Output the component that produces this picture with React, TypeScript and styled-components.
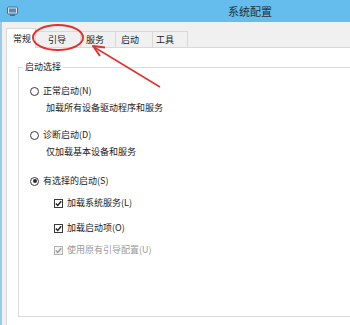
import React from 'react';
import styled, { createGlobalStyle } from 'styled-components';

const GlobalStyle = createGlobalStyle`
  html, body {
    margin: 0;
    padding: 0;
    overflow: hidden;
    background: #ffffff;
  }
  body {
    font-family: "Noto Sans CJK SC", "Noto Sans", sans-serif;
  }
`;

const Screen = styled.div`
  position: relative;
  width: 350px;
  height: 325px;
  overflow: hidden;
`;

const Window = styled.div`
  height: 325px;
  display: flex;
  flex-direction: column;
  background: #f0f0f0;
`;

const TitleBar = styled.div`
  height: 22px;
  flex: none;
  background: #64bdec;
  display: flex;
  align-items: center;
  padding-left: 7px;
  position: relative;
`;

const Title = styled.div`
  position: absolute;
  left: 228px;
  top: 0;
  line-height: 22px;
  font-size: 11px;
  color: #24323f;
`;

const Body = styled.div`
  flex: 1;
  display: flex;
  flex-direction: column;
  border-left: 2px solid #9ccbea;
  padding-left: 4px;
`;

const TabStrip = styled.div`
  height: 26px;
  display: flex;
  align-items: flex-end;
  position: relative;
  z-index: 1;
  margin-bottom: -1px;
`;

const Tab = styled.div<{ $w: number; $pad: number; $active?: boolean }>`
  box-sizing: border-box;
  width: ${(p) => p.$w}px;
  height: ${(p) => (p.$active ? 20 : 17)}px;
  padding-left: ${(p) => p.$pad}px;
  border: 1px solid #d9d9d9;
  border-bottom: ${(p) => (p.$active ? 'none' : '1px solid #d9d9d9')};
  margin-left: ${(p) => (p.$active ? 0 : -1)}px;
  background: ${(p) => (p.$active ? '#ffffff' : '#f0f0f0')};
  font-size: 9px;
  line-height: ${(p) => (p.$active ? 19 : 15)}px;
  color: #222;
  white-space: nowrap;
`;

const Panel = styled.div`
  flex: 1;
  background: #ffffff;
  border-top: 1px solid #d9d9d9;
  border-left: 1px solid #d9d9d9;
  padding: 13px 0 0 11px;
`;

const Group = styled.div`
  border-top: 1px solid #dcdcdc;
  border-left: 1px solid #dcdcdc;
  border-bottom: 1px solid #dcdcdc;
  margin-top: 6px;
  padding: 0 0 60px 4px;
  font-size: 9px;
  line-height: 12px;
`;

const Legend = styled.div`
  width: fit-content;
  margin-top: -7px;
  padding: 0 2px;
  background: #ffffff;
  font-size: 9px;
  line-height: 12px;
  color: #222;
`;

const Row = styled.div<{ $top: number; $indent: number; $muted?: boolean }>`
  display: flex;
  align-items: center;
  height: 12px;
  margin-top: ${(p) => p.$top}px;
  padding-left: ${(p) => p.$indent}px;
  font-size: 9px;
  line-height: 12px;
  color: ${(p) => (p.$muted ? '#9a9a9a' : '#222')};
  white-space: nowrap;
`;

const Radio = styled.span<{ $on?: boolean }>`
  box-sizing: border-box;
  width: 9px;
  height: 9px;
  border-radius: 50%;
  border: 1px solid #3a3a3a;
  margin-right: 4px;
  display: flex;
  align-items: center;
  justify-content: center;
  &::after {
    content: '';
    width: 4px;
    height: 4px;
    border-radius: 50%;
    background: ${(p) => (p.$on ? '#2a2a2a' : 'transparent')};
  }
`;

const Check = styled.span<{ $muted?: boolean }>`
  box-sizing: border-box;
  width: 9px;
  height: 9px;
  border: 1px solid ${(p) => (p.$muted ? '#b4b4b4' : '#3a3a3a')};
  margin-right: 4px;
  display: flex;
  align-items: center;
  justify-content: center;
  background: ${(p) => (p.$muted ? '#f2f2f2' : '#ffffff')};
`;

const Overlay = styled.svg`
  position: absolute;
  left: 0;
  top: 0;
  pointer-events: none;
  z-index: 5;
`;

const tabs = [
  { label: '常规', w: 30, pad: 6, active: true },
  { label: '引导', w: 46, pad: 12 },
  { label: '服务', w: 36, pad: 5 },
  { label: '启动', w: 38, pad: 5 },
  { label: '工具', w: 36, pad: 3 },
];

const Tick = ({ color }: { color: string }) => (
  <svg width="7" height="7" viewBox="0 0 7 7">
    <path d="M0.8 3.6 L2.7 5.5 L6.2 1.2" fill="none" stroke={color} strokeWidth="1.4" />
  </svg>
);

const AppIcon = () => (
  <svg width="11" height="11" viewBox="0 0 11 11">
    <rect x="0.5" y="1" width="10" height="7" rx="1" fill="#d9e6f2" stroke="#4f6b8a" />
    <rect x="2" y="2.5" width="7" height="4" fill="#5a86b8" />
    <rect x="3" y="8.5" width="5" height="1.5" fill="#4f6b8a" />
  </svg>
);

export default function App() {
  return (
    <Screen>
      <GlobalStyle />
      <Window>
        <TitleBar>
          <AppIcon />
          <Title>系统配置</Title>
        </TitleBar>
        <Body>
          <TabStrip>
            {tabs.map((t) => (
              <Tab key={t.label} $w={t.w} $pad={t.pad} $active={t.active}>
                {t.label}
              </Tab>
            ))}
          </TabStrip>
          <Panel>
            <Group>
              <Legend>启动选择</Legend>
              <Row $top={12} $indent={7}>
                <Radio />
                正常启动(N)
              </Row>
              <Row $top={5} $indent={23}>加载所有设备驱动程序和服务</Row>
              <Row $top={15} $indent={7}>
                <Radio />
                诊断启动(D)
              </Row>
              <Row $top={5} $indent={23}>仅加载基本设备和服务</Row>
              <Row $top={17} $indent={7}>
                <Radio $on />
                有选择的启动(S)
              </Row>
              <Row $top={10} $indent={31}>
                <Check>
                  <Tick color="#222" />
                </Check>
                加载系统服务(L)
              </Row>
              <Row $top={13} $indent={31}>
                <Check>
                  <Tick color="#222" />
                </Check>
                加载启动项(O)
              </Row>
              <Row $top={10} $indent={31} $muted>
                <Check $muted>
                  <Tick color="#9a9a9a" />
                </Check>
                使用原有引导配置(U)
              </Row>
            </Group>
          </Panel>
        </Body>
      </Window>
      <Overlay width="350" height="325" viewBox="0 0 350 325">
        <ellipse cx="58" cy="37.5" rx="25" ry="12.5" fill="none" stroke="#e2322f" strokeWidth="2" />
        <line x1="160" y1="87" x2="94" y2="47" stroke="#e2322f" strokeWidth="1.5" />
        <polyline points="105,47.5 93,46 100,56" fill="none" stroke="#e2322f" strokeWidth="2" strokeLinejoin="round" />
      </Overlay>
    </Screen>
  );
}
